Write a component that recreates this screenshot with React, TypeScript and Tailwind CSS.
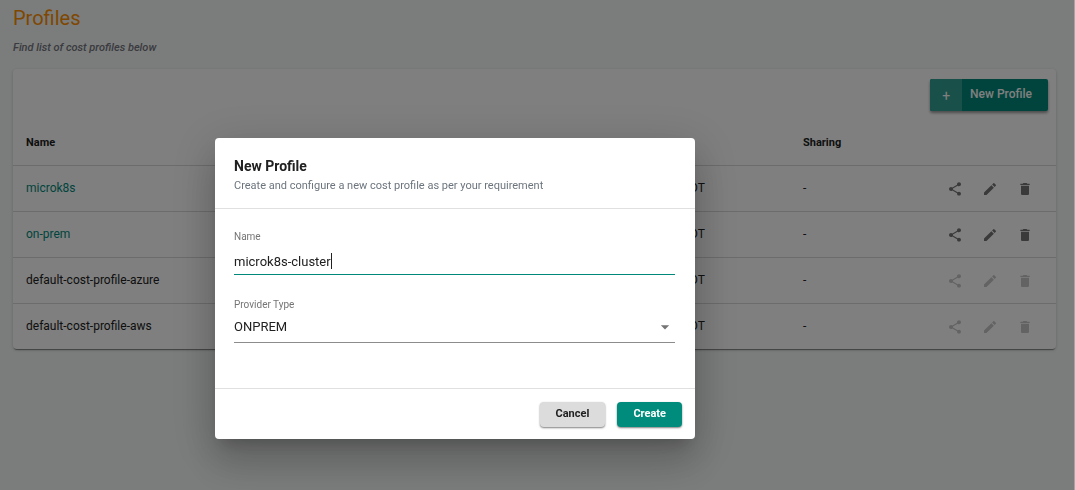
import React, { useLayoutEffect, useRef, useState } from "react";
import { MdShare, MdEdit, MdDelete, MdArrowDropDown } from "react-icons/md";

interface Profile {
  id: number;
  name: string;
  zone: string;
  sharing: string;
  editable: boolean;
}

const profiles: Profile[] = [
  { id: 1, name: "microk8s", zone: "EDT", sharing: "-", editable: true },
  { id: 2, name: "on-prem", zone: "EDT", sharing: "-", editable: true },
  { id: 3, name: "default-cost-profile-azure", zone: "EDT", sharing: "-", editable: false },
  { id: 4, name: "default-cost-profile-aws", zone: "EDT", sharing: "-", editable: false },
];

const App = () => {
  const [open, setOpen] = useState(true);
  const [name, setName] = useState("microk8s-cluster");
  const [provider, setProvider] = useState("ONPREM");
  const [caret, setCaret] = useState(0);
  const inputRef = useRef<HTMLInputElement>(null);

  // keep the caret bar at the end of the typed name
  useLayoutEffect(() => {
    const ctx = document.createElement("canvas").getContext("2d");
    if (!ctx || !inputRef.current) return;
    ctx.font = getComputedStyle(inputRef.current).font;
    setCaret(Math.round(ctx.measureText(name).width));
  }, [name, open]);

  return (
    <div className="min-h-screen bg-[#f6faf8] pt-1 pr-[19px] pl-[13px] font-['Roboto','Liberation_Sans',sans-serif] text-[#212121]">
      <h1 className="text-xl leading-7 text-[#ff8f00]">Profiles</h1>
      <p className="mt-1 text-[11px] leading-6 font-medium text-[#757580] italic">
        Find list of cost profiles below
      </p>

      <div className="mt-[9px] rounded bg-white shadow-[0_2px_1px_-1px_rgba(0,0,0,0.4),0_1px_3px_rgba(0,0,0,0.2)]">
        <div className="flex justify-end px-2 pt-2.5">
          <button
            onClick={() => setOpen(true)}
            className="flex h-8 items-center overflow-hidden rounded-xs bg-[#00897b] text-xs font-medium text-white shadow-[0_2px_3px_rgba(0,0,0,0.4)]"
          >
            <span className="flex h-8 w-8 items-center justify-center bg-[#33a095] pt-0.5 text-sm font-normal">+</span>
            <span className="pr-4 pb-0.5 pl-2">New Profile</span>
          </button>
        </div>

        <table className="w-full table-fixed text-left text-xs">
          <thead>
            <tr className="h-[54px] border-b border-[#d8d8d8] text-[11px]">
              <th className="w-[230px] pt-3 pl-[13px] font-bold">Name</th>
              <th className="w-[107px] pt-3 font-bold">Type</th>
              <th className="w-[105px] pt-3 font-bold">Created By</th>
              <th className="w-[98px] pt-3 font-bold">Created On</th>
              <th className="w-[250px] pt-3 font-bold">Last Modified</th>
              <th className="pt-3 font-bold">Sharing</th>
              <th className="w-[109px]" aria-label="Actions"></th>
            </tr>
          </thead>
          <tbody>
            {profiles.map((profile) => (
              <tr key={profile.id} className="h-[46px] border-b border-[#d8d8d8] last:border-b-0">
                <td className="pl-[13px]">
                  {profile.editable ? (
                    <a href="#" className="text-[#00897b]">{profile.name}</a>
                  ) : (
                    profile.name
                  )}
                </td>
                <td></td>
                <td></td>
                <td></td>
                <td className="pr-[98px] text-right">{profile.zone}</td>
                <td>{profile.sharing}</td>
                <td>
                  <div className="flex gap-[19px] pt-px text-[#757575]">
                    <button aria-label="Share" disabled={!profile.editable} className="disabled:opacity-40">
                      <MdShare size={16} />
                    </button>
                    <button aria-label="Edit" disabled={!profile.editable} className="disabled:opacity-40">
                      <MdEdit size={16} />
                    </button>
                    <button aria-label="Delete" disabled={!profile.editable} className="disabled:opacity-40">
                      <MdDelete size={16} />
                    </button>
                  </div>
                </td>
              </tr>
            ))}
          </tbody>
        </table>
      </div>

      {/* New profile dialog */}
      {open && (
        <div className="fixed inset-0 flex items-start justify-center overflow-hidden border-r border-[#a3a5a4] bg-black/50 pt-[138px] pr-[164px]">
          <div
            role="dialog"
            aria-labelledby="dialog-title"
            className="w-[480px] rounded bg-white shadow-[0_11px_15px_-7px_rgba(0,0,0,0.2),0_24px_38px_3px_rgba(0,0,0,0.14),0_9px_46px_8px_rgba(0,0,0,0.12)]"
          >
            <div className="border-b border-[#e0e0e0] px-[19px] pt-4 pb-3.5">
              <h2 id="dialog-title" className="text-sm leading-6 font-bold">New Profile</h2>
              <p className="text-[11px] leading-4 text-[#6c757d]">
                Create and configure a new cost profile as per your requirement
              </p>
            </div>

            <div className="pt-5 pr-5 pb-[45px] pl-[19px]">
              <label htmlFor="name" className="block text-[10px] leading-4 text-[#757575]">Name</label>
              <div className="relative">
                <input
                  id="name"
                  ref={inputRef}
                  type="text"
                  autoFocus
                  value={name}
                  onChange={(e) => setName(e.target.value)}
                  className="block h-[30px] w-full border-b border-[#00897b] pt-1 text-[13px] caret-transparent outline-none"
                />
                <span className="absolute top-2 h-4 w-px bg-[#212121]" style={{ left: caret }} />
              </div>
              <label htmlFor="provider" className="mt-[22px] block text-[10px] leading-4 text-[#757575]">
                Provider Type
              </label>
              <div className="relative">
                <select
                  id="provider"
                  value={provider}
                  onChange={(e) => setProvider(e.target.value)}
                  className="block h-[30px] w-full appearance-none border-b border-[#8c8c8c] pb-0.5 text-[13px] outline-none"
                >
                  <option>ONPREM</option>
                  <option>AWS</option>
                  <option>AZURE</option>
                </select>
                <MdArrowDropDown size={20} className="pointer-events-none absolute top-1 right-0 text-[#757575]" />
              </div>
            </div>

            <div className="flex justify-end gap-3 border-t border-[#e0e0e0] px-[13px] pt-[13px] pb-3">
              <button
                onClick={() => setOpen(false)}
                className="h-[25px] rounded-sm bg-[#dcdcdc] px-4 text-[11px] font-bold shadow-[0_1px_2px_rgba(0,0,0,0.5)]"
              >
                Cancel
              </button>
              <button
                onClick={() => setOpen(false)}
                className="h-[25px] rounded-sm bg-[#008c7c] px-4 text-[11px] font-bold text-white shadow-[0_1px_2px_rgba(0,0,0,0.5)]"
              >
                Create
              </button>
            </div>
          </div>
        </div>
      )}
    </div>
  );
};

export default App;
